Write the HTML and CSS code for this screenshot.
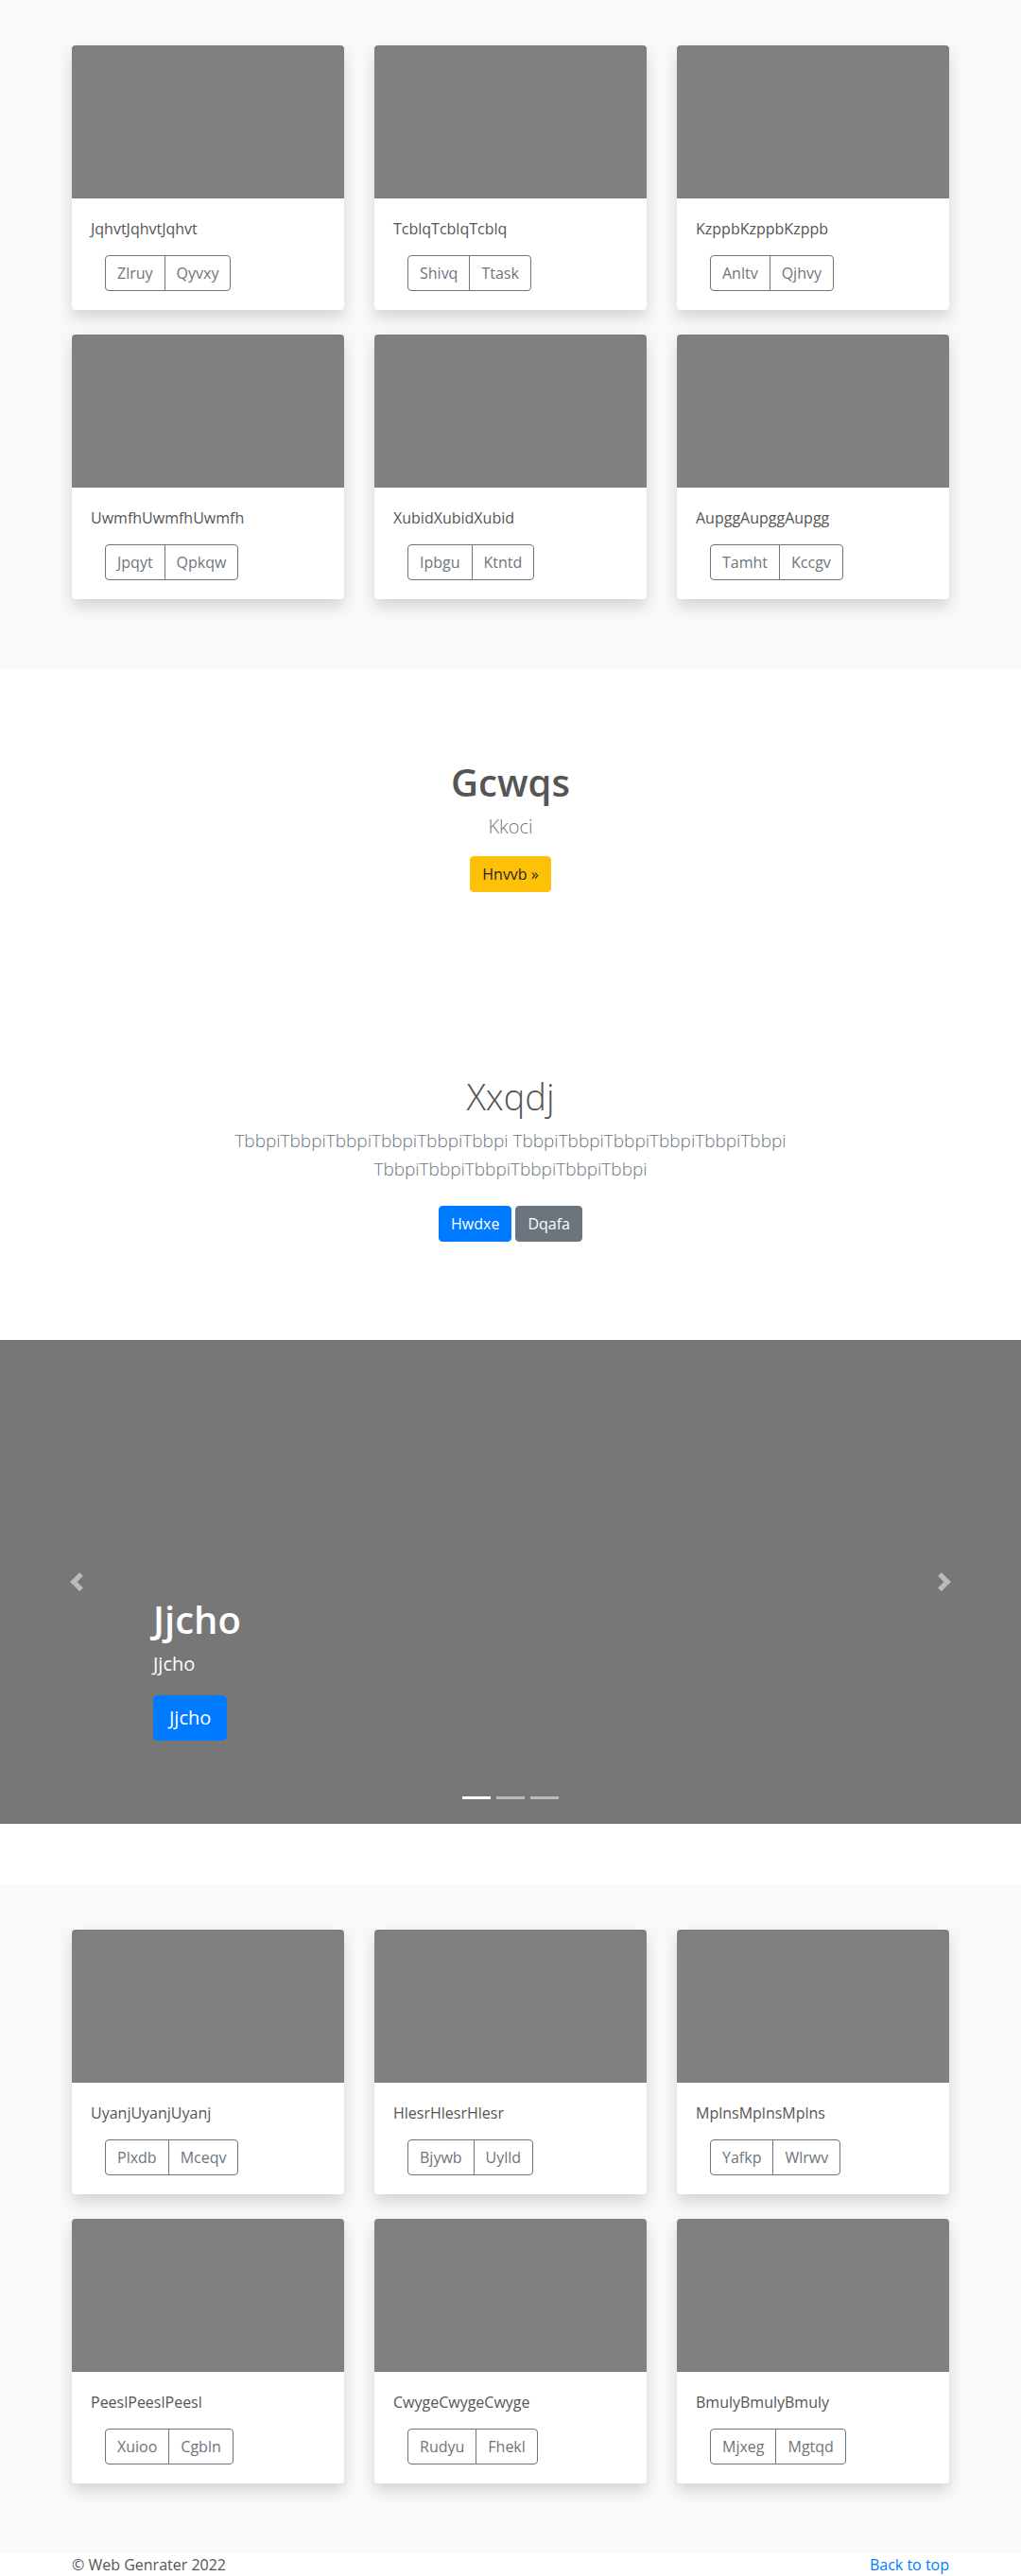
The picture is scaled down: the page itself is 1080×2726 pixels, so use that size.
FILE: index.html
```html
<!DOCTYPE html>
<html lang="en">
<head>
<meta charset="utf-8">
<title>Web Genrater</title>
<link rel="stylesheet" href="styles.css">
</head>
<body>
<main>
  <section class="album">
    <div class="card-grid">
      <div class="card"><div class="card-img"></div><div class="card-body"><p class="card-text">JqhvtJqhvtJqhvt</p><div class="btn-group"><a class="btn btn-outline" href="#">Zlruy</a><a class="btn btn-outline" href="#">Qyvxy</a></div></div></div>
      <div class="card"><div class="card-img"></div><div class="card-body"><p class="card-text">TcblqTcblqTcblq</p><div class="btn-group"><a class="btn btn-outline" href="#">Shivq</a><a class="btn btn-outline" href="#">Ttask</a></div></div></div>
      <div class="card"><div class="card-img"></div><div class="card-body"><p class="card-text">KzppbKzppbKzppb</p><div class="btn-group"><a class="btn btn-outline" href="#">Anltv</a><a class="btn btn-outline" href="#">Qjhvy</a></div></div></div>
      <div class="card"><div class="card-img"></div><div class="card-body"><p class="card-text">UwmfhUwmfhUwmfh</p><div class="btn-group"><a class="btn btn-outline" href="#">Jpqyt</a><a class="btn btn-outline" href="#">Qpkqw</a></div></div></div>
      <div class="card"><div class="card-img"></div><div class="card-body"><p class="card-text">XubidXubidXubid</p><div class="btn-group"><a class="btn btn-outline" href="#">Ipbgu</a><a class="btn btn-outline" href="#">Ktntd</a></div></div></div>
      <div class="card"><div class="card-img"></div><div class="card-body"><p class="card-text">AupggAupggAupgg</p><div class="btn-group"><a class="btn btn-outline" href="#">Tamht</a><a class="btn btn-outline" href="#">Kccgv</a></div></div></div>
    </div>
  </section>

  <section class="intro">
    <div class="intro-block">
      <h1 class="intro-title">Gcwqs</h1>
      <p class="lead">Kkoci</p>
      <div class="actions"><a class="btn btn-warning" href="#">Hnvvb »</a></div>
    </div>
    <div class="intro-block intro-block-last">
      <h1 class="intro-title intro-title-light">Xxqdj</h1>
      <p class="lead lead-wide">TbbpiTbbpiTbbpiTbbpiTbbpiTbbpi TbbpiTbbpiTbbpiTbbpiTbbpiTbbpi TbbpiTbbpiTbbpiTbbpiTbbpiTbbpi</p>
      <div class="actions"><a class="btn btn-primary" href="#">Hwdxe</a><a class="btn btn-secondary" href="#">Dqafa</a></div>
    </div>
  </section>

  <section class="carousel">
    <div class="carousel-caption">
      <h1 class="caption-title">Jjcho</h1>
      <p class="caption-text">Jjcho</p>
      <div class="caption-actions"><a class="btn btn-lg btn-primary" href="#">Jjcho</a></div>
    </div>
    <a class="carousel-control carousel-control-prev" href="#" aria-label="Previous">
      <svg viewBox="0 0 8 8" aria-hidden="true"><path fill="#fff" d="M5.25 0l-4 4 4 4 1.5-1.5L4.25 4l2.5-2.5L5.25 0z"/></svg>
    </a>
    <a class="carousel-control carousel-control-next" href="#" aria-label="Next">
      <svg viewBox="0 0 8 8" aria-hidden="true"><path fill="#fff" d="M2.75 0l-1.5 1.5L3.75 4l-2.5 2.5L2.75 8l4-4-4-4z"/></svg>
    </a>
    <div class="carousel-indicators">
      <span class="indicator indicator-active"></span>
      <span class="indicator"></span>
      <span class="indicator"></span>
    </div>
  </section>

  <section class="album">
    <div class="card-grid">
      <div class="card"><div class="card-img"></div><div class="card-body"><p class="card-text">UyanjUyanjUyanj</p><div class="btn-group"><a class="btn btn-outline" href="#">Plxdb</a><a class="btn btn-outline" href="#">Mceqv</a></div></div></div>
      <div class="card"><div class="card-img"></div><div class="card-body"><p class="card-text">HlesrHlesrHlesr</p><div class="btn-group"><a class="btn btn-outline" href="#">Bjywb</a><a class="btn btn-outline" href="#">Uylld</a></div></div></div>
      <div class="card"><div class="card-img"></div><div class="card-body"><p class="card-text">MplnsMplnsMplns</p><div class="btn-group"><a class="btn btn-outline" href="#">Yafkp</a><a class="btn btn-outline" href="#">Wlrwv</a></div></div></div>
      <div class="card"><div class="card-img"></div><div class="card-body"><p class="card-text">PeeslPeeslPeesl</p><div class="btn-group"><a class="btn btn-outline" href="#">Xuioo</a><a class="btn btn-outline" href="#">Cgbln</a></div></div></div>
      <div class="card"><div class="card-img"></div><div class="card-body"><p class="card-text">CwygeCwygeCwyge</p><div class="btn-group"><a class="btn btn-outline" href="#">Rudyu</a><a class="btn btn-outline" href="#">Fhekl</a></div></div></div>
      <div class="card"><div class="card-img"></div><div class="card-body"><p class="card-text">BmulyBmulyBmuly</p><div class="btn-group"><a class="btn btn-outline" href="#">Mjxeg</a><a class="btn btn-outline" href="#">Mgtqd</a></div></div></div>
    </div>
  </section>
</main>

<footer class="footer">
  <div class="footer-inner">
    <span class="copyright">© Web Genrater 2022</span>
    <a class="back-top" href="#">Back to top</a>
  </div>
</footer>
</body>
</html>
```

FILE: styles.css
```css
* {
  box-sizing: border-box;
}

html,
body {
  margin: 0;
  padding: 0;
}

body {
  font-family: "Open Sans", "Noto Sans", "Liberation Sans", sans-serif;
  font-size: 16px;
  line-height: 24px;
  color: #555;
  background: #fff;
}

h1,
p {
  margin: 0;
}

/* ---------- album ---------- */
.album {
  background: #f8f9fa;
  padding: 48px 0 74px;
}

.card-grid {
  width: 928px;
  margin: 0 auto;
  display: grid;
  grid-template-columns: repeat(3, 288px);
  column-gap: 32px;
  row-gap: 26px;
}

.card {
  background: #fff;
  border-radius: 4px;
  box-shadow: 0 8px 16px rgba(0, 0, 0, 0.15);
  overflow: hidden;
}

.card-img {
  height: 162px;
  background: #808080;
}

.card-body {
  padding: 20px;
}

.card-text {
  margin-bottom: 16px;
}

.btn-group {
  display: flex;
  width: max-content;
  margin-left: 15px;
}

/* ---------- buttons ---------- */
.btn {
  display: inline-block;
  font-family: inherit;
  font-size: 16px;
  line-height: 24px;
  padding: 6px 12px;
  border: 1px solid transparent;
  border-radius: 4px;
  text-decoration: none;
  text-align: center;
  white-space: nowrap;
}

.btn-outline {
  color: #6c757d;
  border-color: #6c757d;
  background: transparent;
}

.btn-group .btn:first-child {
  border-top-right-radius: 0;
  border-bottom-right-radius: 0;
}

.btn-group .btn:last-child {
  border-top-left-radius: 0;
  border-bottom-left-radius: 0;
  margin-left: -1px;
}

.btn-warning {
  background: #ffc107;
  border-color: #ffc107;
  color: #212529;
}

.btn-primary {
  background: #007bff;
  border-color: #007bff;
  color: #fff;
}

.btn-secondary {
  background: #6c757d;
  border-color: #6c757d;
  color: #fff;
}

.btn-lg {
  font-size: 20px;
  line-height: 30px;
  padding: 8px 16px;
  border-radius: 5px;
}

/* ---------- intro ---------- */
.intro {
  background: #fff;
  text-align: center;
}

.intro-block {
  padding: 96px 0;
}

.intro-block-last {
  padding: 96px 0 104px;
}

.intro-title {
  font-size: 40px;
  line-height: 48px;
  font-weight: 600;
  color: #555;
  margin-bottom: 8px;
}

.intro-title-light {
  font-weight: 300;
  font-size: 38px;
}

.lead {
  font-size: 20px;
  line-height: 30px;
  font-weight: 300;
  color: #6c757d;
  margin-bottom: 16px;
}

.lead-wide {
  font-size: 19px;
  max-width: 660px;
  margin: 0 auto 24px;
}

.actions {
  display: flex;
  justify-content: center;
  gap: 4px;
}

/* ---------- carousel ---------- */
.carousel {
  position: relative;
  height: 512px;
  background: #777;
  margin-bottom: 64px;
  overflow: hidden;
}

.carousel-caption {
  position: absolute;
  left: 15%;
  right: 15%;
  bottom: 88px;
  color: #fff;
  text-align: left;
}

.caption-title {
  font-size: 40px;
  line-height: 48px;
  font-weight: 600;
  margin-bottom: 8px;
}

.caption-text {
  font-size: 20px;
  line-height: 30px;
  margin-bottom: 18px;
}

.caption-actions {
  display: flex;
}

.carousel-control {
  position: absolute;
  top: 0;
  bottom: 0;
  width: 15%;
  display: flex;
  align-items: center;
  justify-content: center;
  opacity: 0.5;
}

.carousel-control-prev {
  left: 0;
}

.carousel-control-next {
  right: 0;
}

.carousel-control svg {
  width: 20px;
  height: 20px;
  display: block;
}

.carousel-indicators {
  position: absolute;
  left: 0;
  right: 0;
  bottom: 26px;
  display: flex;
  justify-content: center;
  gap: 6px;
}

.indicator {
  width: 30px;
  height: 3px;
  background: #fff;
  opacity: 0.5;
}

.indicator-active {
  opacity: 1;
}

/* ---------- footer ---------- */
.footer {
  height: 24px;
  background: #fff;
}

.footer-inner {
  width: 928px;
  margin: 0 auto;
  display: flex;
  justify-content: space-between;
}

.copyright {
  color: #555;
}

.back-top {
  color: #007bff;
  text-decoration: none;
}
```
